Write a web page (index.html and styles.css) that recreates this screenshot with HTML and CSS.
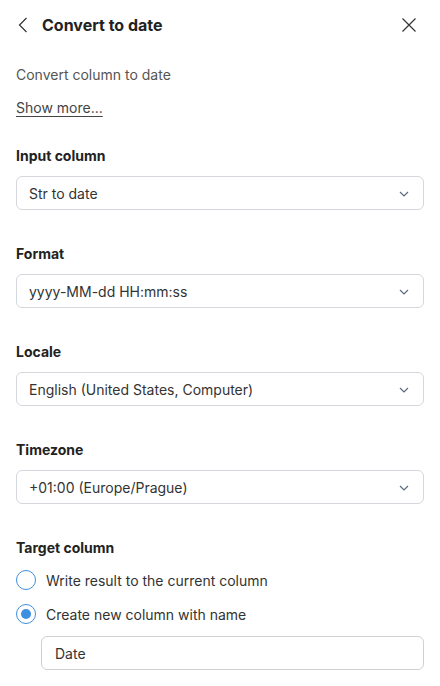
FILE: index.html
```html
<!DOCTYPE html>
<html>
<head>
<meta charset="utf-8">
<link rel="stylesheet" href="styles.css">
</head>
<body>
<div class="panel">
  <div class="header">
    <span class="back">
      <svg width="10" height="16" viewBox="0 0 10 16"><path d="M8.5 1 L1.5 8 L8.5 15" fill="none" stroke="#333" stroke-width="1.2"/></svg>
    </span>
    <h1 class="title">Convert to date</h1>
    <span class="close">
      <svg width="16" height="16" viewBox="0 0 16 16"><path d="M1.5 1.5 L14.5 14.5 M14.5 1.5 L1.5 14.5" fill="none" stroke="#333" stroke-width="1.2"/></svg>
    </span>
  </div>
  <p class="desc">Convert column to date</p>
  <a class="more">Show more...</a>

  <div class="field">
    <div class="label">Input column</div>
    <div class="select"><span>Str to date</span><svg class="chev" width="10" height="6" viewBox="0 0 10 6"><path d="M1 1 L5 5 L9 1" fill="none" stroke="#5b6b80" stroke-width="1.2"/></svg></div>
  </div>
  <div class="field">
    <div class="label">Format</div>
    <div class="select"><span>yyyy-MM-dd HH:mm:ss</span><svg class="chev" width="10" height="6" viewBox="0 0 10 6"><path d="M1 1 L5 5 L9 1" fill="none" stroke="#5b6b80" stroke-width="1.2"/></svg></div>
  </div>
  <div class="field">
    <div class="label">Locale</div>
    <div class="select"><span>English (United States, Computer)</span><svg class="chev" width="10" height="6" viewBox="0 0 10 6"><path d="M1 1 L5 5 L9 1" fill="none" stroke="#5b6b80" stroke-width="1.2"/></svg></div>
  </div>
  <div class="field">
    <div class="label">Timezone</div>
    <div class="select"><span>+01:00 (Europe/Prague)</span><svg class="chev" width="10" height="6" viewBox="0 0 10 6"><path d="M1 1 L5 5 L9 1" fill="none" stroke="#5b6b80" stroke-width="1.2"/></svg></div>
  </div>
  <div class="field">
    <div class="label">Target column</div>
    <div class="radio-row first"><span class="radio"></span><span>Write result to the current column</span></div>
    <div class="radio-row"><span class="radio checked"></span><span>Create new column with name</span></div>
    <div class="textinput">Date</div>
  </div>
</div>
</body>
</html>
```
FILE: styles.css
```css
* { box-sizing: border-box; }
html, body { margin: 0; padding: 0; background: #fff; }
body {
  font-family: Inter, "Noto Sans", sans-serif;
  font-size: 14px;
  color: #333;
}
.panel { padding: 0 16px 0 16px; }
.header {
  height: 50px;
  display: flex;
  align-items: center;
}
.back { width: 26px; display: flex; align-items: center; padding-left: 2px; }
.title {
  flex: 1;
  margin: 0;
  font-size: 16px;
  font-weight: 700;
  color: #222;
}
.close { display: flex; align-items: center; margin-right: 7px; }
.desc {
  margin: 15px 0 0 0;
  line-height: 20px;
  color: #555;
}
.more {
  display: block;
  width: max-content;
  margin-top: 13px;
  line-height: 20px;
  color: #444;
  text-decoration: underline;
  text-underline-offset: 3px;
}
.field { margin-top: 28px; }
.field + .field { margin-top: 34px; }
.label {
  line-height: 20px;
  font-weight: 700;
  color: #222;
}
.select {
  margin-top: 10px;
  height: 34px;
  border: 1px solid #d4d7dc;
  border-radius: 6px;
  display: flex;
  align-items: center;
  justify-content: space-between;
  padding: 0 14px 0 12px;
  color: #333;
}
.chev { margin-top: 1px; }
.radio-row {
  display: flex;
  align-items: center;
  height: 20px;
  margin-top: 14px;
  color: #333;
}
.radio-row.first { margin-top: 12px; }
.radio {
  width: 20px;
  height: 20px;
  border: 1.5px solid #3d8fe0;
  border-radius: 50%;
  margin-right: 10px;
  display: flex;
  align-items: center;
  justify-content: center;
}
.radio.checked::after {
  content: "";
  width: 10px;
  height: 10px;
  border-radius: 50%;
  background: #3d8fe0;
}
.textinput {
  margin: 12px 0 0 25px;
  height: 34px;
  border: 1px solid #d0d0d0;
  border-radius: 6px;
  display: flex;
  align-items: center;
  padding: 0 13px;
  color: #333;
}
```
